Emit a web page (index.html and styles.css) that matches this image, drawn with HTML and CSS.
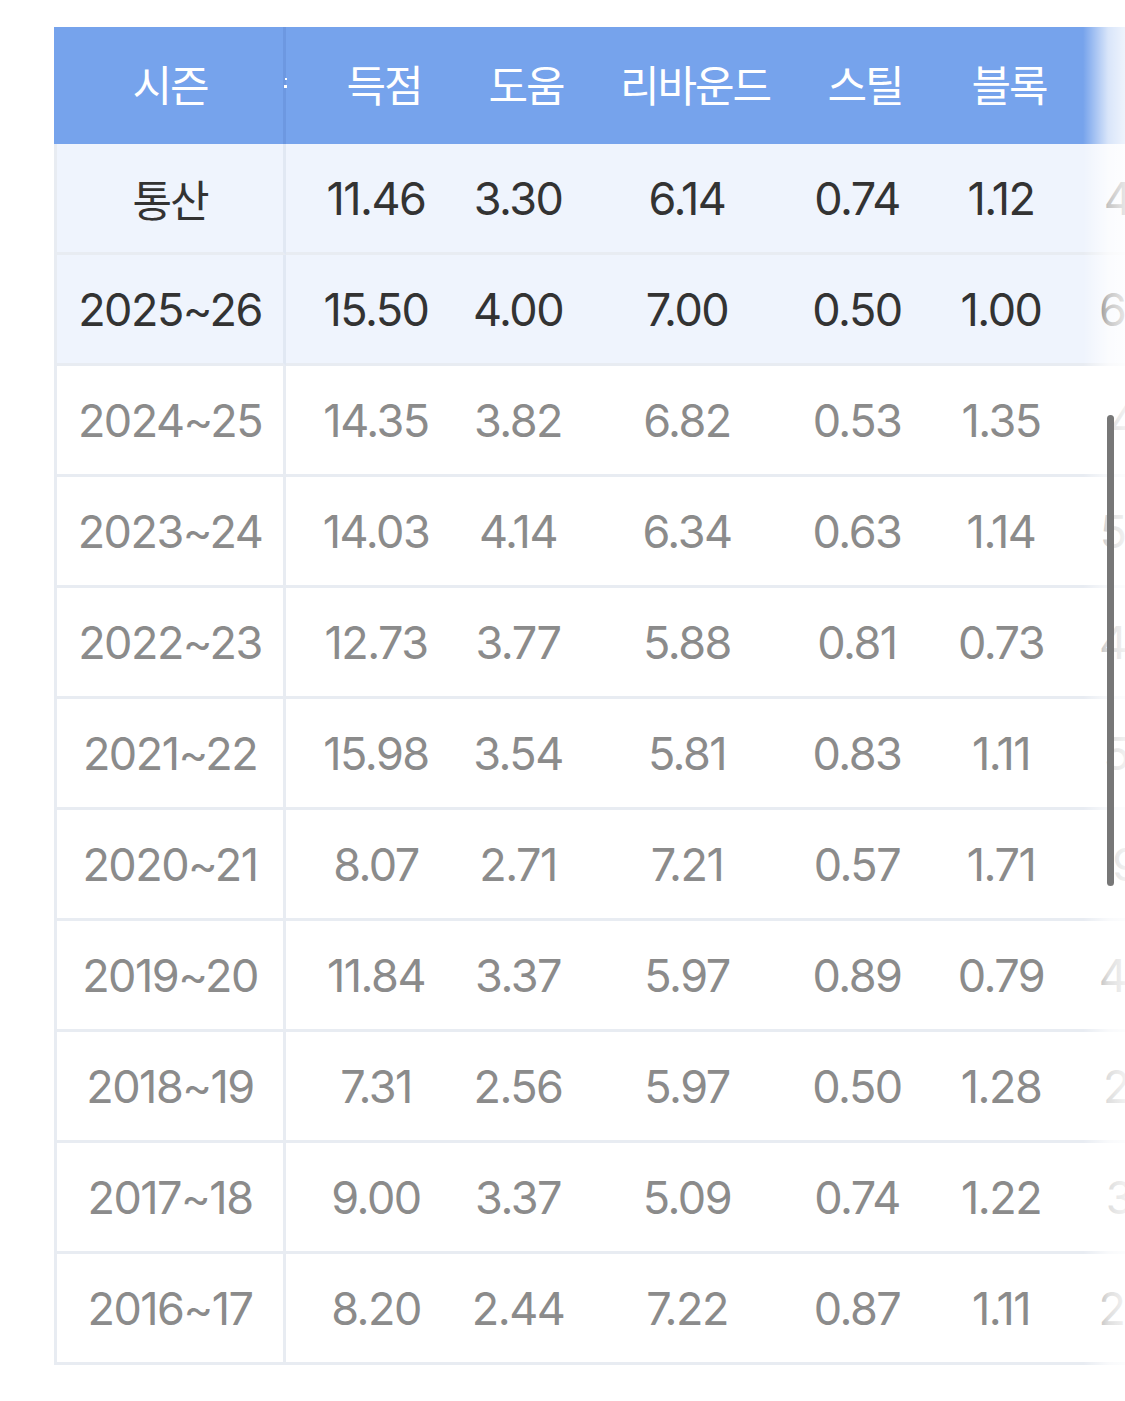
FILE: index.html
```html
<!DOCTYPE html>
<html lang="ko">
<head>
<meta charset="utf-8">
<title>시즌 기록</title>
<link rel="stylesheet" href="styles.css">
</head>
<body>
<div class="page">
  <div class="scroller">
    <table class="stats">
      <colgroup>
        <col class="c-season"><col class="c-pts"><col class="c-ast"><col class="c-reb"><col class="c-stl"><col class="c-blk"><col class="c-fg">
      </colgroup>
      <thead>
        <tr>
          <th class="sticky">시즌<span class="handle"><i></i><i></i></span></th>
          <th>득점</th><th>도움</th><th>리바운드</th><th>스틸</th><th>블록</th><th>야투</th>
        </tr>
      </thead>
      <tbody>
        <tr class="hl"><td class="sticky">통산</td><td>11.46</td><td>3.30</td><td>6.14</td><td>0.74</td><td>1.12</td><td>45.21</td></tr>
        <tr class="hl"><td class="sticky">2025~26</td><td>15.50</td><td>4.00</td><td>7.00</td><td>0.50</td><td>1.00</td><td>60.00</td></tr>
        <tr><td class="sticky">2024~25</td><td>14.35</td><td>3.82</td><td>6.82</td><td>0.53</td><td>1.35</td><td>47.12</td></tr>
        <tr><td class="sticky">2023~24</td><td>14.03</td><td>4.14</td><td>6.34</td><td>0.63</td><td>1.14</td><td>50.33</td></tr>
        <tr><td class="sticky">2022~23</td><td>12.73</td><td>3.77</td><td>5.88</td><td>0.81</td><td>0.73</td><td>46.80</td></tr>
        <tr><td class="sticky">2021~22</td><td>15.98</td><td>3.54</td><td>5.81</td><td>0.83</td><td>1.11</td><td>51.04</td></tr>
        <tr><td class="sticky">2020~21</td><td>8.07</td><td>2.71</td><td>7.21</td><td>0.57</td><td>1.71</td><td>9.00</td></tr>
        <tr><td class="sticky">2019~20</td><td>11.84</td><td>3.37</td><td>5.97</td><td>0.89</td><td>0.79</td><td>44.62</td></tr>
        <tr><td class="sticky">2018~19</td><td>7.31</td><td>2.56</td><td>5.97</td><td>0.50</td><td>1.28</td><td>27.50</td></tr>
        <tr><td class="sticky">2017~18</td><td>9.00</td><td>3.37</td><td>5.09</td><td>0.74</td><td>1.22</td><td>36.10</td></tr>
        <tr><td class="sticky">2016~17</td><td>8.20</td><td>2.44</td><td>7.22</td><td>0.87</td><td>1.11</td><td>28.40</td></tr>
      </tbody>
    </table>
    <div class="fade"></div>
    <div class="scrollbar"></div>
  </div>
</div>
</body>
</html>
```

FILE: styles.css
```css
html, body {
  margin: 0;
  padding: 0;
  background: #ffffff;
}

body {
  font-family: Inter, "Noto Sans", "Noto Sans CJK KR", sans-serif;
  overflow: hidden;
}

.page {
  padding: 27px 0 0 54px;
}

.scroller {
  position: relative;
  width: 1071px;
  overflow: hidden;
}

.stats {
  border-collapse: separate;
  border-spacing: 0;
  table-layout: fixed;
  width: 1168px;
}

.c-season { width: 232px; }
.c-pts { width: 180px; }
.c-ast { width: 104px; }
.c-reb { width: 234px; }
.c-stl { width: 106px; }
.c-blk { width: 182px; }
.c-fg { width: 130px; }

.stats th,
.stats td {
  box-sizing: border-box;
  text-align: center;
  padding: 0;
  white-space: nowrap;
}

.stats th {
  height: 117px;
  background: #76a3ec;
  color: #ffffff;
  font-family: "Noto Sans CJK KR", sans-serif;
  font-weight: 400;
  font-size: 43px;
  letter-spacing: -2px;
  padding-left: 16px;
  padding-bottom: 6px;
}

.stats th.sticky {
  position: relative;
  padding-left: 0;
  border-left: 3px solid #76a3ec;
  border-right: 3px solid #6d98e1;
}

.handle {
  position: absolute;
  right: -4px;
  top: 51px;
  display: flex;
  flex-direction: column;
  align-items: center;
  gap: 5px;
}

.handle i {
  display: block;
  width: 2px;
  height: 2px;
  background: #ffffff;
}

.handle i + i {
  width: 3px;
  height: 3px;
}

.stats td {
  height: 111px;
  border-bottom: 3px solid #e8ecf2;
  font-size: 45px;
  letter-spacing: -1.5px;
  color: #8b8b8b;
  background: #ffffff;
}

.stats td.sticky {
  border-left: 3px solid #e8ecf2;
  border-right: 3px solid #e8ecf2;
}

.stats tr.hl td {
  background: #eff4fd;
  color: #333333;
}

.stats tr.hl td.sticky {
  border-right-color: #e1e8f3;
}

.stats tbody tr:first-child td:first-child {
  font-family: "Noto Sans CJK KR", sans-serif;
  font-size: 43px;
  letter-spacing: -2px;
}

.fade {
  position: absolute;
  top: 0;
  right: 0;
  bottom: 0;
  width: 42px;
  background: linear-gradient(to right, rgba(255, 255, 255, 0), rgba(255, 255, 255, 0.72) 60%, rgba(255, 255, 255, 0.88));
  pointer-events: none;
}

.scrollbar {
  position: absolute;
  top: 388px;
  right: 11px;
  width: 7px;
  height: 471px;
  border-radius: 4px;
  background: #777777;
}
```
